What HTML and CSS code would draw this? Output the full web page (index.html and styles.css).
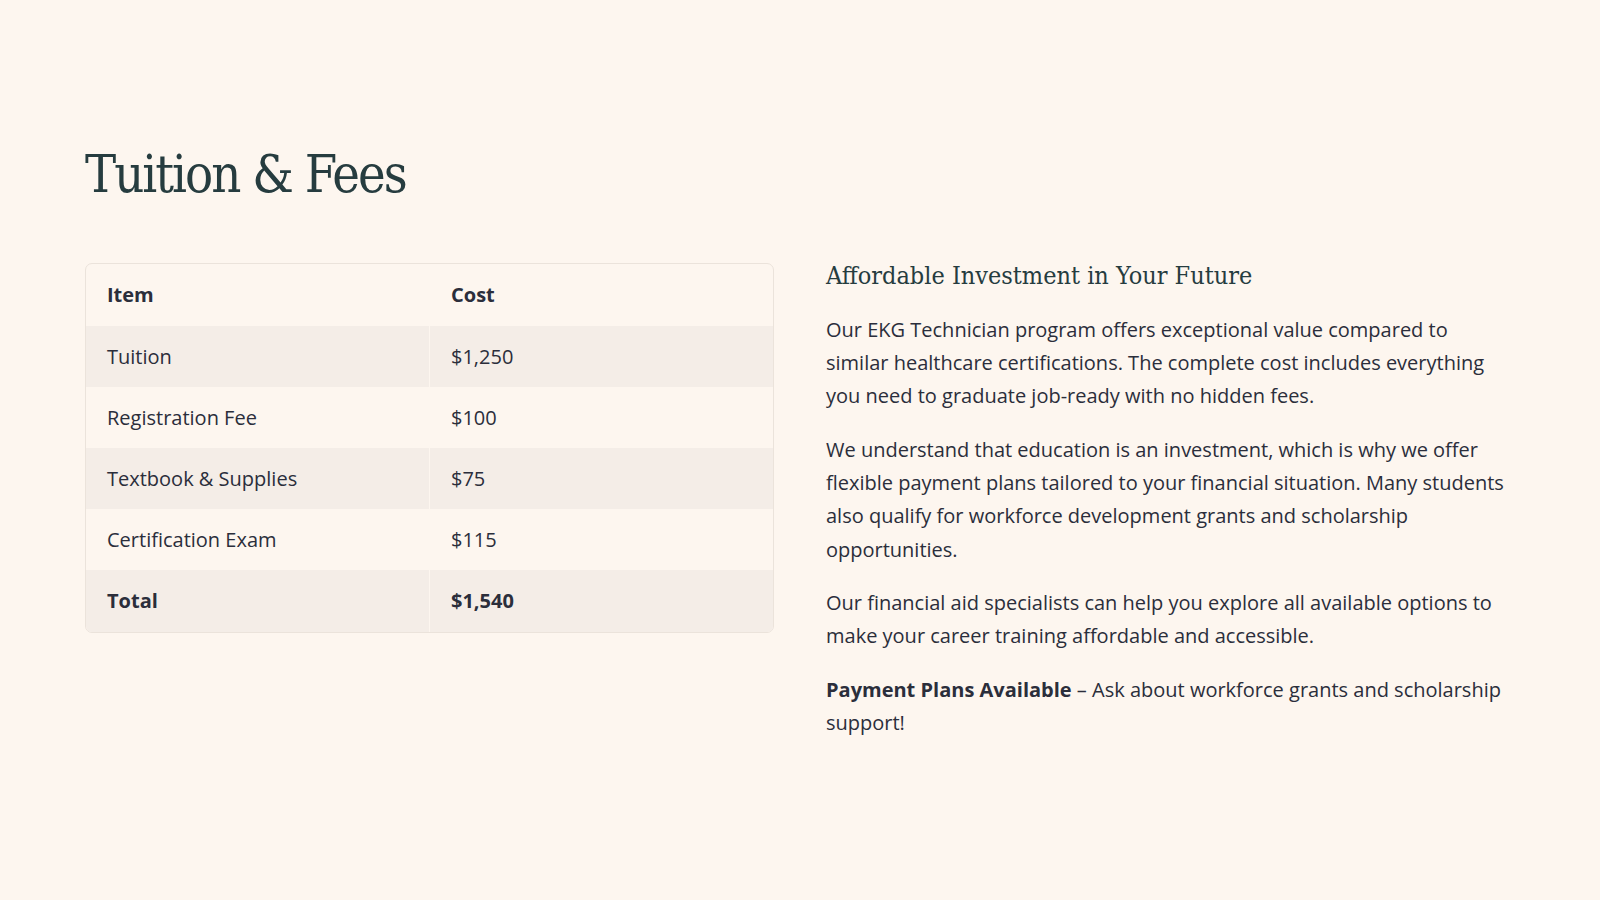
FILE: index.html
```html
<!DOCTYPE html>
<html lang="en">
<head>
<meta charset="utf-8">
<title>Tuition &amp; Fees</title>
<link rel="stylesheet" href="styles.css">
</head>
<body>
<main class="page">
  <h1 class="title">Tuition &amp; Fees</h1>
  <div class="content">
    <div class="table-wrap">
      <table class="fees">
        <thead>
          <tr><th>Item</th><th>Cost</th></tr>
        </thead>
        <tbody>
          <tr><td>Tuition</td><td>$1,250</td></tr>
          <tr><td>Registration Fee</td><td>$100</td></tr>
          <tr><td>Textbook &amp; Supplies</td><td>$75</td></tr>
          <tr><td>Certification Exam</td><td>$115</td></tr>
          <tr class="total"><td>Total</td><td>$1,540</td></tr>
        </tbody>
      </table>
    </div>
    <div class="info">
      <h2 class="info-title">Affordable Investment in Your Future</h2>
      <p>Our EKG Technician program offers exceptional value compared to similar healthcare certifications. The complete cost includes everything you need to graduate job-ready with no hidden fees.</p>
      <p>We understand that education is an investment, which is why we offer flexible payment plans tailored to your financial situation. Many students also qualify for workforce development grants and scholarship opportunities.</p>
      <p>Our financial aid specialists can help you explore all available options to make your career training affordable and accessible.</p>
      <p><strong>Payment Plans Available</strong> – Ask about workforce grants and scholarship support!</p>
    </div>
  </div>
</main>
</body>
</html>
```
FILE: styles.css
```css
html, body {
  margin: 0;
  padding: 0;
}

body {
  background: #fdf6ef;
  color: #2b2e3b;
  font-family: "Open Sans", "Noto Sans", sans-serif;
}

.page {
  padding: 143px 85px 60px;
}

.title {
  margin: 0 0 53px;
  font-family: "DejaVu Serif Condensed", "DejaVu Serif", serif;
  font-weight: 400;
  font-size: 52px;
  letter-spacing: -2px;
  line-height: 1.2;
  color: #263c3f;
}

.content {
  display: grid;
  grid-template-columns: 1fr 1fr;
  gap: 52px;
  align-items: start;
}

.table-wrap {
  margin-top: 5px;
  border: 1px solid #ebe3db;
  border-radius: 7px;
  overflow: hidden;
}

.fees {
  width: 100%;
  border-collapse: collapse;
  table-layout: fixed;
  font-size: 20px;
}

.fees th,
.fees td {
  height: 61.2px;
  padding: 0 21px;
  text-align: left;
  vertical-align: middle;
  box-sizing: border-box;
}

.fees th {
  font-weight: 700;
}

.fees th:first-child,
.fees td:first-child {
  border-right: 1px solid #fdf6ef;
}

.fees tbody tr:nth-child(odd) {
  background: #f4ede7;
}

.fees tr.total td {
  font-weight: 700;
}

.info-title {
  margin: 2px 0 20px;
  font-family: "DejaVu Serif Condensed", "DejaVu Serif", serif;
  font-weight: 400;
  font-size: 25px;
  line-height: 1.3;
  color: #263c3f;
}

.info p {
  margin: 0 0 20px;
  font-size: 20px;
  line-height: 33.3px;
}

.info strong {
  font-weight: 700;
}
```
